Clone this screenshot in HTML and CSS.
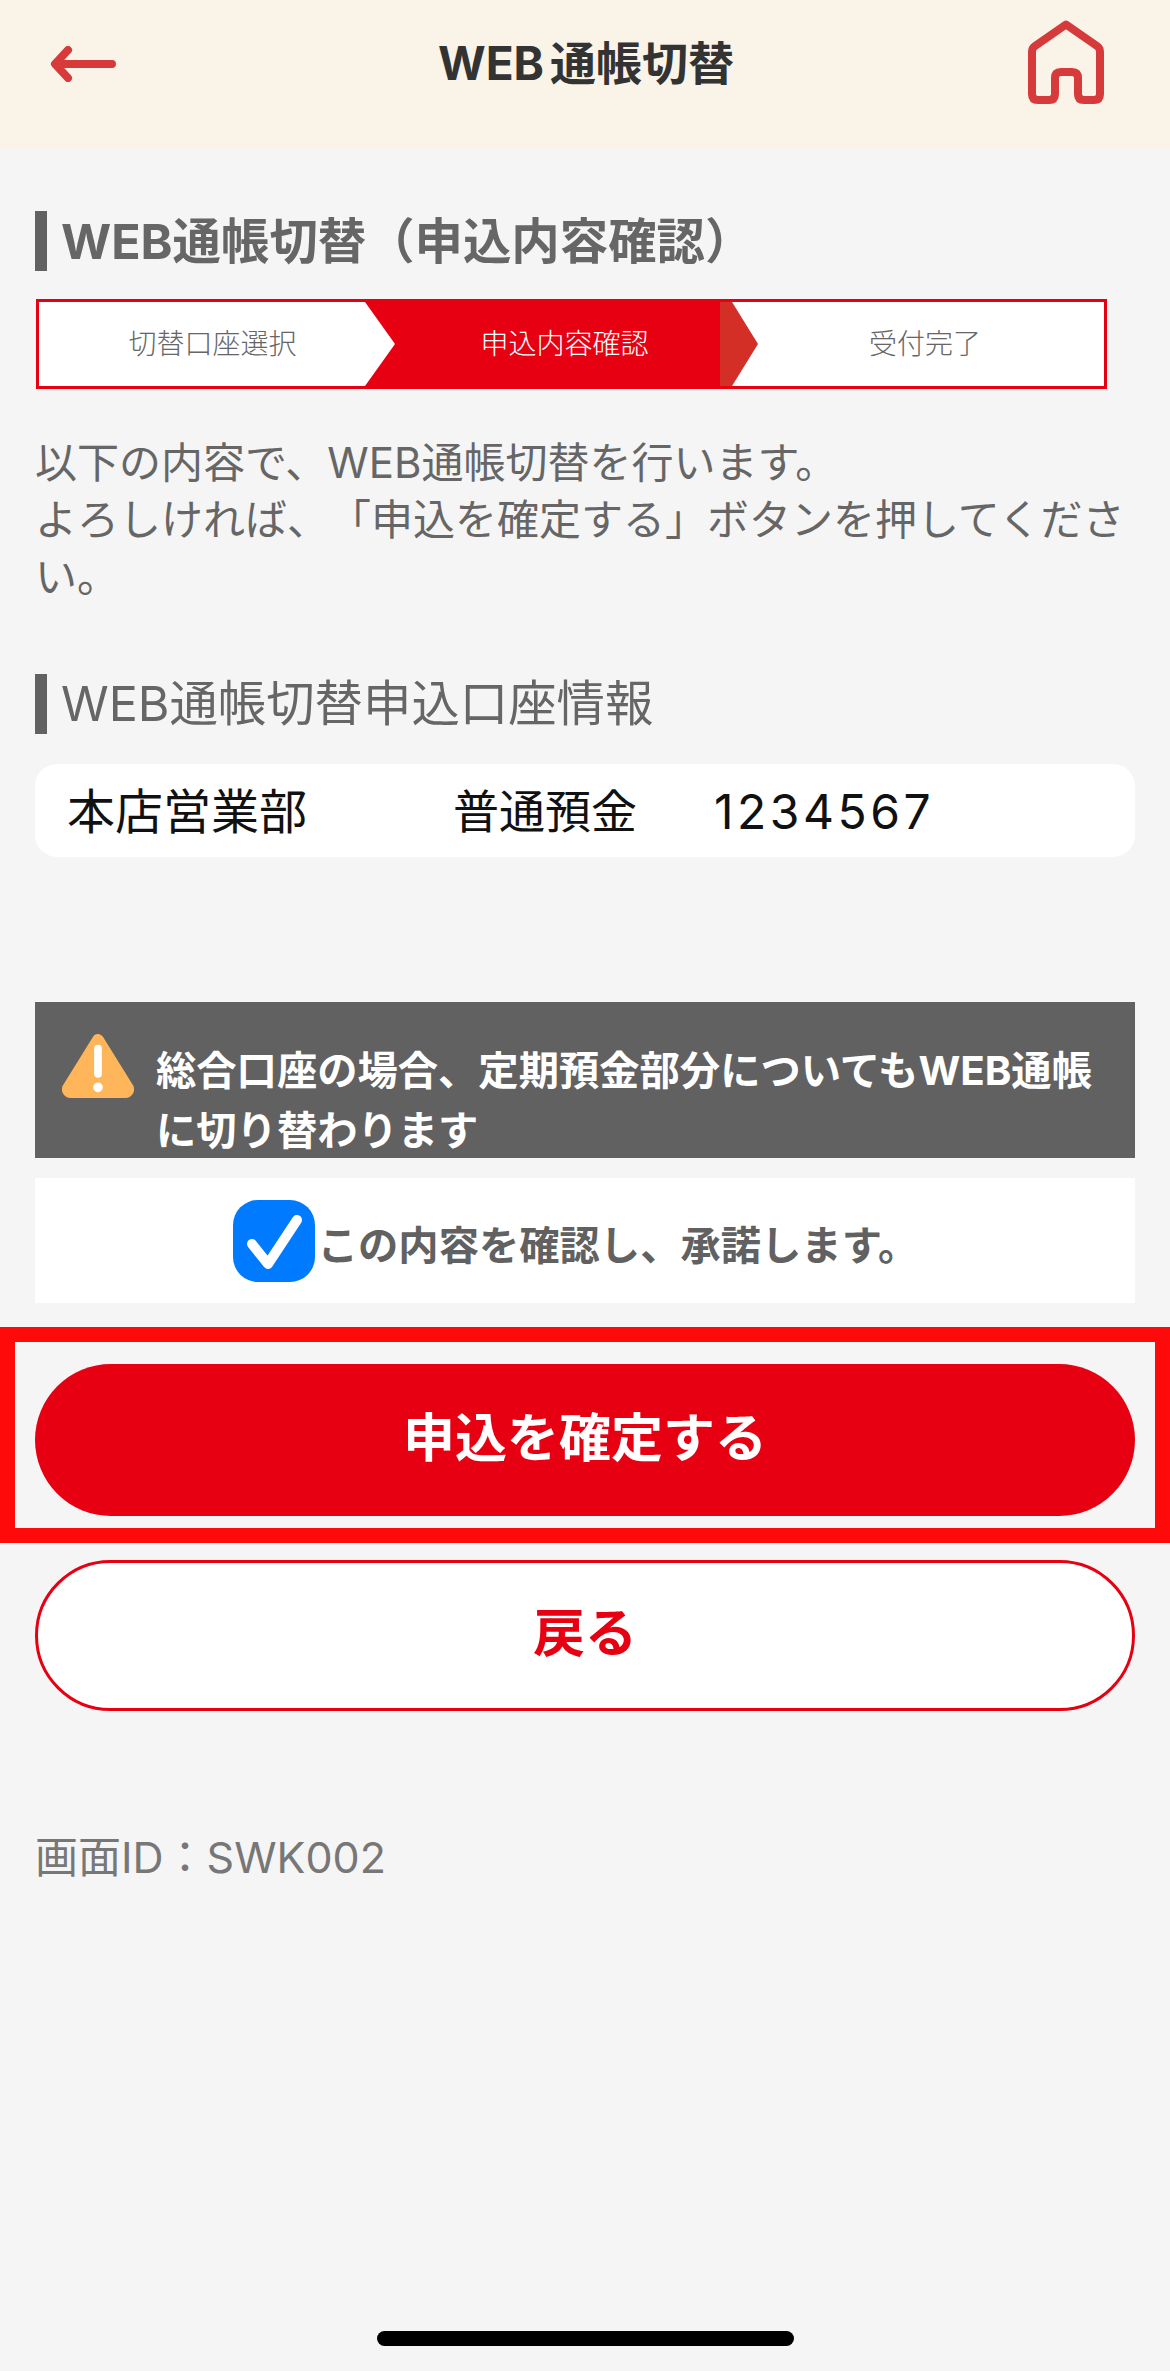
FILE: index.html
```html
<!DOCTYPE html>
<html lang="ja">
<head>
<meta charset="utf-8">
<title>WEB通帳切替</title>
<link rel="stylesheet" href="styles.css">
</head>
<body>
<header class="topbar">
  <svg class="back-icon" viewBox="0 0 66 36" aria-hidden="true"><path d="M62 18H7M18 4 5 18l13 14" fill="none" stroke="#d63a3a" stroke-width="8" stroke-linecap="round" stroke-linejoin="round"/></svg>
  <h1 class="topbar-title">WEB<span class="topbar-cjk">通帳切替</span></h1>
  <svg class="home-icon" viewBox="0 0 76 84" aria-hidden="true"><path d="M38 4.5 7 26q-3 2-3 6v42q0 6 6 6h11q6 0 6-6V58q0-6 6-6h11q6 0 6 6v16q0 6 6 6h10q6 0 6-6V32q0-4-3-6Z" fill="none" stroke="#d63a3a" stroke-width="8" stroke-linejoin="round"/></svg>
</header>
<main class="content">
  <h2 class="section-title strong">WEB通帳切替（申込内容確認）</h2>
  <ol class="stepper">
    <li class="step step-done">切替口座選択</li>
    <li class="step step-current">申込内容確認</li>
    <li class="step step-next"><span class="step-next-fill">受付完了</span></li>
  </ol>
  <p class="lead">以下の内容で、WEB通帳切替を行います。<br>よろしければ、「申込を確定する」ボタンを押してください。</p>
  <h2 class="section-title">WEB通帳切替申込口座情報</h2>
  <div class="account">
    <span class="account-branch">本店営業部</span>
    <span class="account-type">普通預金</span>
    <span class="account-number">1234567</span>
  </div>
  <div class="notice">
    <svg class="notice-icon" viewBox="0 0 74 66" aria-hidden="true"><path d="M37 6 6 56a3 3 0 0 0 3 4h56a3 3 0 0 0 3-4Z" fill="#ffb55a" stroke="#ffb55a" stroke-width="12" stroke-linejoin="round"/><path d="M37 15v26" stroke="#fff" stroke-width="8" stroke-linecap="round"/><circle cx="37" cy="55" r="5" fill="#fff"/></svg>
    <p class="notice-text">総合口座の場合、定期預金部分についてもWEB通帳に切り替わります</p>
  </div>
  <div class="confirm">
    <svg class="check-icon" viewBox="0 0 82 82" aria-hidden="true"><rect width="82" height="82" rx="25" fill="#007aff"/><path d="M19 44 35 64 64 20" fill="none" stroke="#fff" stroke-width="10" stroke-linecap="round" stroke-linejoin="round"/></svg>
    <span class="confirm-text">この内容を確認し、承諾します。</span>
  </div>
  <div class="highlight">
    <a class="btn btn-primary">申込を確定する</a>
  </div>
  <a class="btn btn-secondary">戻る</a>
  <p class="screen-id">画面ID：SWK002</p>
</main>
<div class="home-indicator"></div>
</body>
</html>
```
FILE: styles.css
```css
* { box-sizing: border-box; }
html, body { margin: 0; padding: 0; }
body {
  position: relative;
  height: 2371px;
  overflow: hidden;
  background: #f5f5f5;
  font-family: Inter, "Noto Sans CJK JP", "Noto Sans", sans-serif;
  color: #616161;
  text-spacing-trim: space-all;
}
.topbar {
  height: 150px;
  background: #f9f3e8;
  display: flex;
  align-items: flex-start;
  justify-content: space-between;
  padding: 20px 66px 0 50px;
}
.back-icon { width: 66px; height: 36px; margin-top: 26px; }
.home-icon { width: 76px; height: 84px; }
.topbar-title {
  margin: 10px 0 0 28px;
  font-size: 46px;
  line-height: 66px;
  font-weight: 700;
  color: #333;
}
.topbar-cjk { margin-left: 6px; }
.content { padding: 61px 35px 0; }
.section-title {
  margin: 0;
  height: 60px;
  border-left: 12px solid #616161;
  padding-left: 14px;
  font-size: 48.4px;
  line-height: 60px;
  font-weight: 400;
  color: #666;
  white-space: nowrap;
}
.section-title.strong { font-weight: 700; font-size: 48.4px; line-height: 62px; }
.stepper {
  list-style: none;
  display: flex;
  width: 1071px;
  height: 90px;
  margin: 28px 0 0 1px;
  padding: 0;
  border: 3px solid #e60012;
  background: #e60012;
}
.step {
  height: 84px;
  font-size: 28px;
  font-weight: 300;
  line-height: 85px;
  text-align: center;
}
.step-done {
  width: 356px;
  padding-right: 9px;
  background: #fff;
  color: #666;
  clip-path: polygon(0 0, 326px 0, 356px 50%, 326px 100%, 0 100%);
}
.step-current {
  width: 325px;
  padding-left: 14px;
  color: #fff;
}
.step-next {
  flex: 1;
  background: #d32f27;
  color: #666;
}
.step-next-fill {
  display: block;
  height: 84px;
  padding-left: 26px;
  background: #fff;
  clip-path: polygon(12px 0, 100% 0, 100% 100%, 12px 100%, 38px 50%);
}
.lead {
  margin: 45px 0 69px;
  font-size: 42px;
  line-height: 57px;
  color: #666;
}
.account {
  display: flex;
  align-items: center;
  height: 93px;
  margin-top: 30px;
  padding-left: 32px;
  background: #fff;
  border-radius: 22px;
  font-size: 48px;
  color: #111;
}
.account-branch { width: 386px; padding-bottom: 5px; }
.account-type { width: 260px; font-size: 46px; padding-bottom: 5px; }
.account-number { letter-spacing: 3.5px; padding-top: 2px; margin-left: 1px; }
.notice {
  position: relative;
  height: 156px;
  margin-top: 145px;
  padding: 39px 30px 0 121px;
  background: #616161;
  overflow: hidden;
}
.notice-icon {
  position: absolute;
  left: 27px;
  top: 32px;
  width: 72px;
  height: 64px;
}
.notice-text {
  margin: 0;
  font-size: 40.3px;
  line-height: 60px;
  font-weight: 700;
  color: #fff;
}
.confirm {
  display: flex;
  align-items: center;
  justify-content: center;
  gap: 3px;
  height: 125px;
  margin-top: 20px;
  padding-right: 19px;
  background: #fff;
}
.check-icon { width: 82px; height: 82px; }
.confirm-text {
  padding-top: 3px;
  font-size: 40.3px;
  font-weight: 700;
  color: #616161;
}
.highlight {
  height: 216px;
  margin: 24px -35px 0;
  padding: 22px 20px 0;
  border: 15px solid #ff0a0a;
}
.btn {
  display: block;
  height: 152px;
  border-radius: 76px;
  font-size: 52px;
  font-weight: 700;
  line-height: 150px;
  text-align: center;
}
.btn-primary {
  background: #e60012;
  color: #fff;
}
.btn-secondary {
  height: 151px;
  margin-top: 17px;
  border: 3px solid #e60012;
  background: #fff;
  color: #e60012;
  line-height: 141px;
}
.screen-id {
  margin: 117px 0 0;
  font-size: 43px;
  line-height: 58px;
  color: #777;
}
.home-indicator {
  position: absolute;
  left: 377px;
  top: 2331px;
  width: 417px;
  height: 15px;
  border-radius: 8px;
  background: #000;
}
```
